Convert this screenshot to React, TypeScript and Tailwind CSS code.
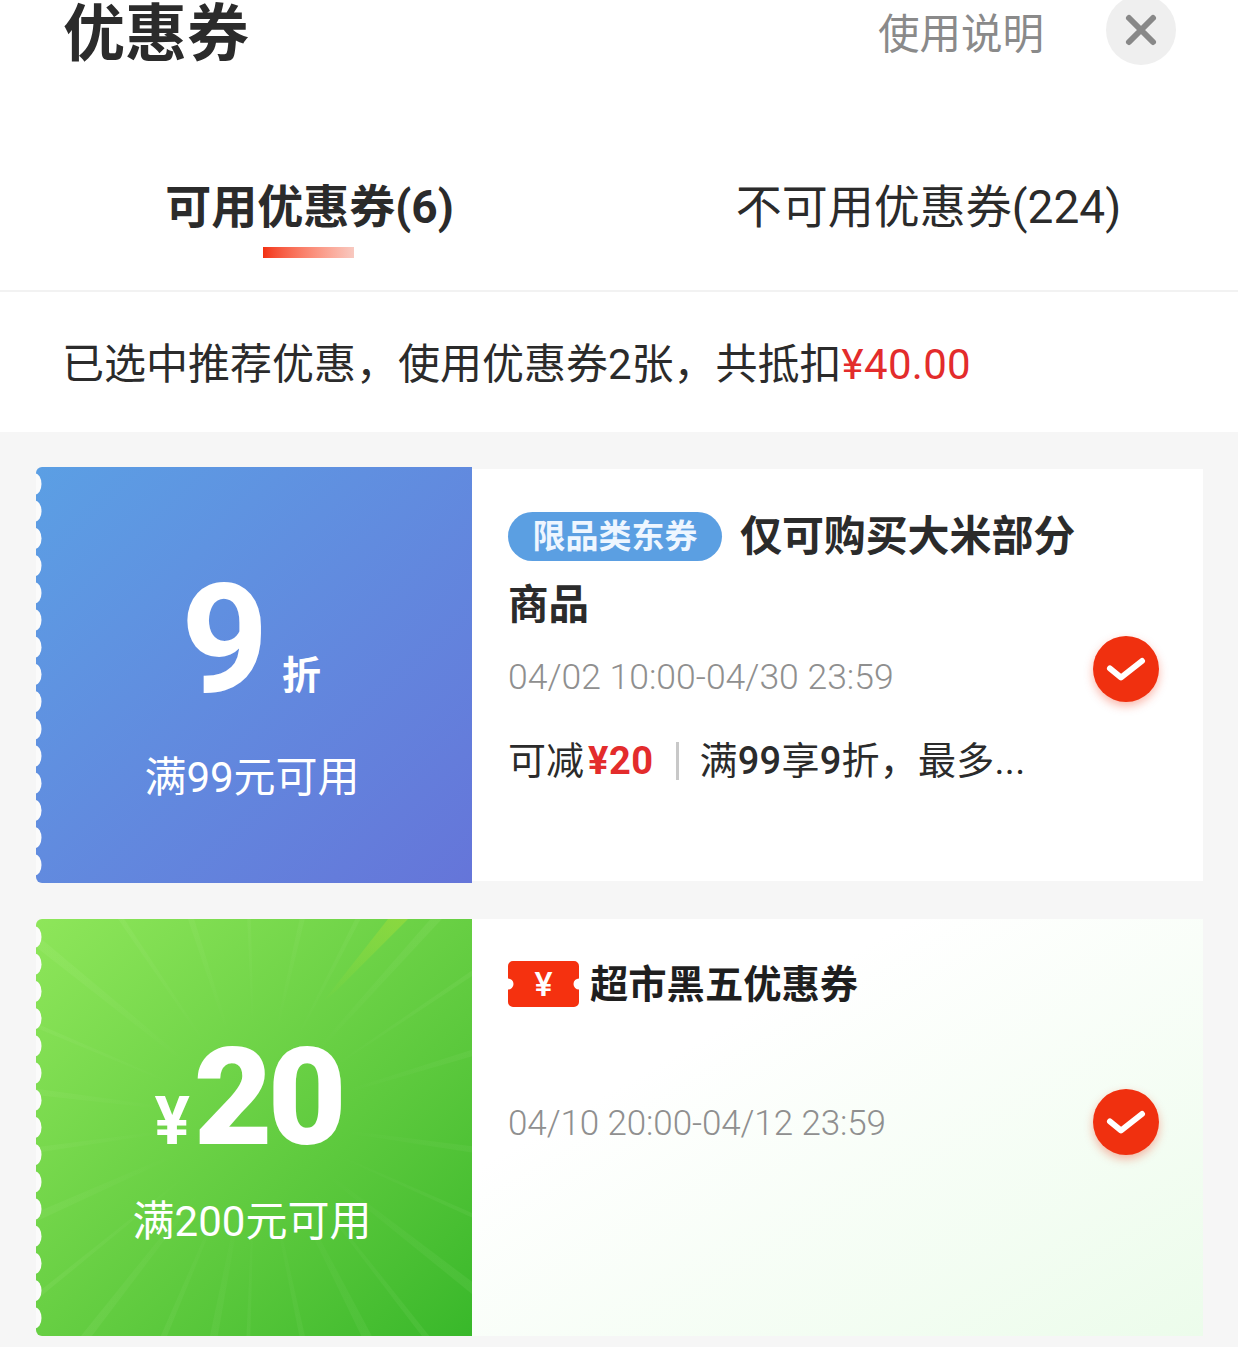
const rays: [number, number][] = [
  [8, 0.8], [24, 0.5], [38, 1], [52, 0.6], [63, 1.1], [78, 0.7], [92, 0.5], [101, 1], [113, 0.7],
  [128, 0.9], [141, 0.5], [156, 1], [172, 0.7], [187, 0.8], [203, 0.5], [219, 1], [236, 0.6],
  [252, 0.8], [268, 0.5], [283, 0.7], [297, 0.6], [312, 0.9], [326, 0.5], [343, 0.8],
];

function Rays() {
  const cx = 220;
  const cy = 200;
  const len = 420;
  return (
    <svg className="absolute inset-0 w-full h-full pointer-events-none" viewBox="0 0 436 417" preserveAspectRatio="none">
      <defs>
        <radialGradient id="fade" gradientUnits="userSpaceOnUse" cx={cx} cy={cy} r="300">
          <stop offset="0.3" stopColor="#ffffff" stopOpacity="0" />
          <stop offset="1" stopColor="#d8ffb8" stopOpacity="0.08" />
        </radialGradient>
        <linearGradient id="streak" x1="1" y1="0" x2="0" y2="1">
          <stop offset="0" stopColor="#9fdc3a" stopOpacity="0.6" />
          <stop offset="1" stopColor="#9fdc3a" stopOpacity="0" />
        </linearGradient>
      </defs>
      {rays.map(([deg, w], i) => {
        const a = ((deg - w) * Math.PI) / 180;
        const b = ((deg + w) * Math.PI) / 180;
        return (
          <polygon
            key={i}
            fill="url(#fade)"
            points={`${cx},${cy} ${cx + len * Math.cos(a)},${cy + len * Math.sin(a)} ${cx + len * Math.cos(b)},${cy + len * Math.sin(b)}`}
          />
        );
      })}
      <polygon points="352,0 372,0 300,72 286,84" fill="url(#streak)" />
    </svg>
  );
}

function Scallop({ height, start }: { height: number; start: number }) {
  const ys: number[] = [];
  for (let y = start; y < height + 10; y += 27.2) ys.push(y);
  return (
    <svg className="absolute left-0 top-0 w-[8px] h-full pointer-events-none" viewBox={`0 0 8 ${height}`} preserveAspectRatio="none">
      {ys.map((y) => (
        <ellipse key={y} cx="-1" cy={y} rx="6.5" ry="10.5" fill="#fbfbfb" />
      ))}
    </svg>
  );
}

function Check() {
  return (
    <div className="w-[66px] h-[66px] mb-[12px] rounded-full bg-[#f0300f] shadow-[0_4px_10px_rgba(240,48,15,0.35)] flex items-center justify-center shrink-0">
      <svg width="40" height="28" viewBox="0 0 40 28" fill="none">
        <path d="M4 13.5 L15 22.5 L36 6" stroke="#fff" strokeWidth="6" strokeLinecap="round" strokeLinejoin="round" />
      </svg>
    </div>
  );
}

function TicketIcon() {
  return (
    <svg width="71" height="46" viewBox="0 0 71 46" className="shrink-0">
      <path
        d="M5 0H66a5 5 0 0 1 5 5V17.5a5.5 5.5 0 0 0 0 11V41a5 5 0 0 1-5 5H5a5 5 0 0 1-5-5V28.5a5.5 5.5 0 0 0 0-11V5a5 5 0 0 1 5-5Z"
        fill="#f5310f"
      />
      <text x="35.5" y="35" textAnchor="middle" fontSize="34" fontWeight="500" fill="#fff" fontFamily="Roboto, 'Noto Sans CJK SC', sans-serif">
        ¥
      </text>
    </svg>
  );
}

export default function App() {
  return (
    <div className="w-[1238px] h-[1347px] overflow-hidden bg-white text-[#2b2b2b] font-['Roboto','Noto_Sans_CJK_SC',sans-serif]">
      {/* header */}
      <div className="h-[60px] pl-[63px] pr-[62px] flex items-center">
        <div className="text-[62px] leading-[70px] font-bold text-[#2b2b2b] flex-1 mt-[10px]">优惠券</div>
        <div className="text-[41.5px] leading-[50px] text-[#8a8a8a] mt-[10px]">使用说明</div>
        <div className="ml-[62px] w-[70px] h-[70px] shrink-0 rounded-full bg-[#efefef] flex items-center justify-center">
          <svg width="34" height="34" viewBox="0 0 34 34" fill="none">
            <path d="M5 5 L29 29 M29 5 L5 29" stroke="#888888" strokeWidth="6" strokeLinecap="round" />
          </svg>
        </div>
      </div>

      {/* tabs */}
      <div className="grid grid-cols-2 h-[232px] pt-[117px] border-b-2 border-[#f2f2f2]">
        <div className="flex flex-col items-center">
          <div className="text-[46px] leading-[60px] font-bold text-[#2b2b2b]">可用优惠券(6)</div>
          <div className="mt-[10px] mr-[2px] w-[91px] h-[11px] bg-gradient-to-r from-[#f2300f] to-[#f8c9c0]" />
        </div>
        <div className="flex flex-col items-center">
          <div className="text-[46px] leading-[60px] text-[#2b2b2b]">不可用优惠券(224)</div>
        </div>
      </div>

      {/* summary */}
      <div className="h-[140px] pl-[62px] pt-[6px] flex items-center text-[42px] leading-[50px] text-[#2b2b2b]">
        <span>已选中推荐优惠，使用优惠券2张，共抵扣</span>
        <span className="text-[#e32c2c] tracking-[0.3px]">¥40.00</span>
      </div>

      {/* list */}
      <div className="bg-[#f6f6f6] h-[915px] pt-[35px] pl-[36px] pr-[35px] flex flex-col gap-[36px]">
        {/* card 1 */}
        <div className="flex h-[416px]">
          <div className="relative w-[436px] shrink-0 rounded-l-[6px] overflow-hidden bg-gradient-to-br from-[#5b9fe4] to-[#6575d9] text-white flex flex-col items-center">
            <Scallop height={416} start={17} />
            <div className="flex items-baseline mt-[99px] h-[148px] ml-[-6px]">
              <span className="text-[153px] leading-[148px] font-bold">9</span>
              <span className="relative -top-[3px] text-[39px] leading-[40px] font-bold ml-[13px]">折</span>
            </div>
            <div className="text-[42px] leading-[50px] mt-[39px] mr-[4px]">满99元可用</div>
          </div>
          <div className="flex-1 my-[2px] bg-white pl-[36px] pr-[44px] flex items-center">
            <div className="flex-1 min-w-0 self-start">
              <div className="flex items-center mt-[43px] h-[49px]">
                <span className="w-[214px] h-[49px] rounded-full bg-[#5b9fe2] text-[#eef6ff] text-[33px] leading-[49px] font-bold text-center shrink-0">限品类东券</span>
                <span className="ml-[18px] text-[42px] leading-[50px] font-bold tracking-[-0.1px]">仅可购买大米部分</span>
              </div>
              <div className="mt-[19px] h-[50px] text-[40.5px] leading-[50px] font-bold">商品</div>
              <div className="mt-[24px] h-[46px] text-[35.5px] leading-[46px] text-[#8f8f8f] font-light">04/02 10:00-04/30 23:59</div>
              <div className="mt-[38px] h-[46px] flex items-center text-[38px] leading-[46px]">
                <span>可减</span>
                <span className="text-[#e32c2c] font-bold ml-[4px] tracking-[0.5px]">¥20</span>
                <span className="w-[3px] h-[38px] bg-[#c8c8c8] ml-[22px] mr-[21px]" />
                <span className="tracking-[0.25px]">满<span className="font-medium">99</span>享<span className="font-medium">9</span>折，最多...</span>
              </div>
            </div>
            <Check />
          </div>
        </div>

        {/* card 2 */}
        <div className="flex h-[417px]">
          <div className="relative w-[436px] shrink-0 rounded-l-[6px] overflow-hidden bg-gradient-to-br from-[#8ee65a] to-[#38b82a] text-white flex flex-col items-center">
            <Rays />
            <Scallop height={417} start={18} />
            <div className="relative flex items-baseline mt-[119px] h-[120px] ml-[-12px]">
              <span className="text-[66px] leading-[60px] font-bold mr-[4px]">¥</span>
              <span className="text-[136px] leading-[120px] font-black tracking-[-5px]">20</span>
            </div>
            <div className="relative text-[42px] leading-[50px] mt-[39px] mr-[4px]">满200元可用</div>
          </div>
          <div className="flex-1 bg-gradient-to-br from-[#ffffff] from-30% to-[#ecfceb] pl-[36px] pr-[44px] flex items-center">
            <div className="flex-1 min-w-0 self-start">
              <div className="flex items-center mt-[42px] h-[46px]">
                <TicketIcon />
                <span className="relative top-px ml-[11px] text-[38.3px] leading-[46px] font-bold text-[#1f1f1f]">超市黑五优惠券</span>
              </div>
              <div className="mt-[94px] h-[46px] text-[35px] leading-[46px] text-[#8f8f8f] font-light tracking-[-0.1px]">04/10 20:00-04/12 23:59</div>
            </div>
            <Check />
          </div>
        </div>
      </div>
    </div>
  );
}
